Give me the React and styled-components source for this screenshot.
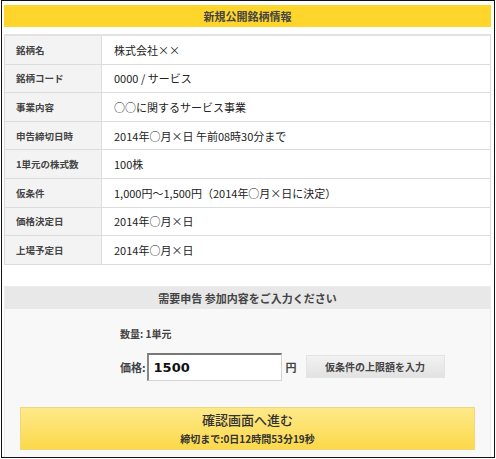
import React from 'react';
import styled, { createGlobalStyle } from 'styled-components';

const GlobalStyle = createGlobalStyle`
  html, body {
    margin: 0;
    padding: 0;
    background: #fff;
  }
  body {
    font-family: 'Noto Sans CJK JP', 'DejaVu Sans', sans-serif;
    color: #333;
  }
`;

const Frame = styled.div`
  box-sizing: border-box;
  width: 494px;
  height: 458px;
  margin-left: 1px;
  border: 1px solid #111;
  padding: 4px 3px 0 2px;
  overflow: hidden;
`;

const TitleBar = styled.div`
  height: 22px;
  line-height: 22px;
  background: #fdd52b;
  text-align: center;
  font-size: 11px;
  font-weight: 700;
  color: #444;
`;

const InfoTable = styled.div`
  margin-top: 7px;
  border: 1px solid #dcdcdc;
  border-top: 2px solid #e2e2e2;
`;

const Row = styled.div`
  display: grid;
  grid-template-columns: 97px 1fr;
  height: 27.6px;
  border-bottom: 1px solid #dcdcdc;
  &:last-child {
    border-bottom: 0;
  }
`;

const Label = styled.div`
  display: flex;
  align-items: center;
  padding-left: 11px;
  background: #f3f3f3;
  border-right: 1px solid #dcdcdc;
  font-size: 9.5px;
  font-weight: 700;
  color: #444;
`;

const Value = styled.div`
  display: flex;
  align-items: center;
  padding-left: 12px;
  font-size: 11px;
  color: #222;
`;

const Panel = styled.div`
  margin-top: 21px;
  height: 200px;
  background: #f8f8f8;
  border: 1px solid #ececec;
  border-bottom: 0;
`;

const PanelHead = styled.div`
  height: 22px;
  line-height: 22px;
  background: #e8e8e8;
  text-align: center;
  font-size: 11px;
  font-weight: 700;
  color: #444;
`;

const PanelBody = styled.div`
  padding: 17px 15px 0 15px;
`;

const FormLines = styled.div`
  padding-left: 100px;
  display: flex;
  flex-direction: column;
  gap: 12px;
`;

const Qty = styled.div`
  font-size: 10px;
  font-weight: 700;
  color: #444;
`;

const PriceRow = styled.div`
  display: flex;
  align-items: center;
`;

const PriceLabel = styled.span`
  font-size: 11px;
  font-weight: 700;
  color: #444;
  margin-right: 1px;
`;

const PriceInput = styled.input`
  box-sizing: border-box;
  width: 135px;
  height: 28px;
  padding: 0 0 0 5px;
  border: 1px solid #d4d4d4;
  border-top: 2px solid #777;
  border-left: 2px solid #888;
  background: #fff;
  font-family: 'DejaVu Sans', sans-serif;
  font-size: 13px;
  font-weight: 700;
  color: #111;
  outline: none;
`;

const Yen = styled.span`
  font-size: 11px;
  font-weight: 700;
  color: #444;
  margin: 0 9px 0 4px;
`;

const GrayButton = styled.button`
  box-sizing: border-box;
  width: 139px;
  height: 23px;
  border: 1px solid #e4e4e4;
  background: linear-gradient(#f2f2f2, #e2e2e2);
  font-family: 'Noto Sans CJK JP', sans-serif;
  font-size: 10px;
  font-weight: 700;
  color: #444;
  padding: 0;
  cursor: pointer;
`;

const ConfirmButton = styled.button`
  box-sizing: border-box;
  display: flex;
  flex-direction: column;
  align-items: center;
  justify-content: center;
  width: 100%;
  height: 43px;
  margin-top: 26px;
  padding: 0;
  border: 1px solid #f2d77a;
  background: linear-gradient(#fde98a, #fcd94a);
  font-family: 'Noto Sans CJK JP', sans-serif;
  color: #333;
  cursor: pointer;
`;

const ConfirmTitle = styled.span`
  font-size: 13px;
  font-weight: 500;
  line-height: 20px;
`;

const Deadline = styled.span`
  font-size: 10px;
  font-weight: 700;
  line-height: 17px;
`;

const rows = [
  ['銘柄名', '株式会社××'],
  ['銘柄コード', '0000 / サービス'],
  ['事業内容', '○○に関するサービス事業'],
  ['申告締切日時', '2014年○月×日 午前08時30分まで'],
  ['1単元の株式数', '100株'],
  ['仮条件', '1,000円～1,500円（2014年○月×日に決定）'],
  ['価格決定日', '2014年○月×日'],
  ['上場予定日', '2014年○月×日'],
];

export default function App() {
  return (
    <>
      <GlobalStyle />
      <Frame>
        <TitleBar>新規公開銘柄情報</TitleBar>
        <InfoTable>
          {rows.map(([label, value]) => (
            <Row key={label}>
              <Label>{label}</Label>
              <Value>{value}</Value>
            </Row>
          ))}
        </InfoTable>
        <Panel>
          <PanelHead>需要申告 参加内容をご入力ください</PanelHead>
          <PanelBody>
            <FormLines>
              <Qty>数量: 1単元</Qty>
              <PriceRow>
                <PriceLabel>価格:</PriceLabel>
                <PriceInput defaultValue="1500" />
                <Yen>円</Yen>
                <GrayButton>仮条件の上限額を入力</GrayButton>
              </PriceRow>
            </FormLines>
            <ConfirmButton>
              <ConfirmTitle>確認画面へ進む</ConfirmTitle>
              <Deadline>締切まで:0日12時間53分19秒</Deadline>
            </ConfirmButton>
          </PanelBody>
        </Panel>
      </Frame>
    </>
  );
}
